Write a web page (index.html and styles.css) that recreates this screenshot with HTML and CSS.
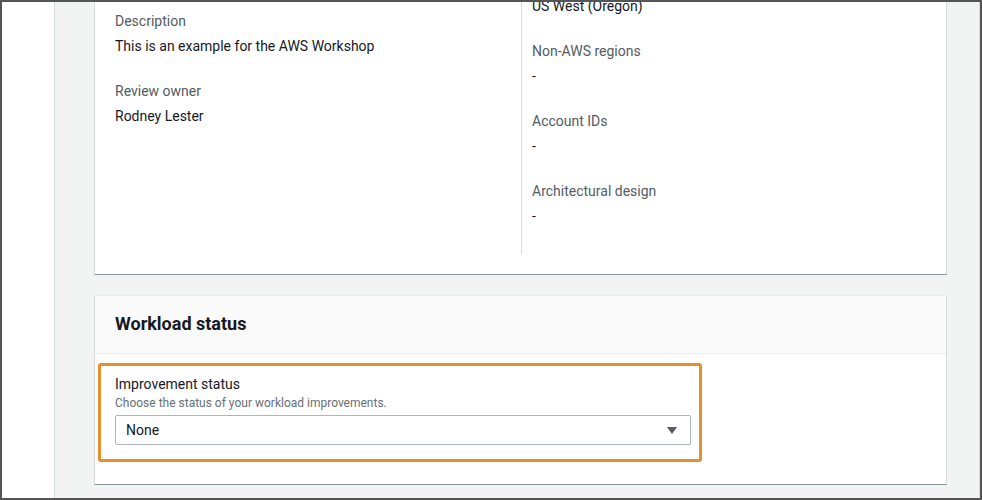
FILE: index.html
```html
<!DOCTYPE html>
<html lang="en">
<head>
<meta charset="utf-8">
<title>Workload</title>
<link rel="stylesheet" href="styles.css">
</head>
<body>
<div class="frame">
  <nav class="sidenav"></nav>
  <main class="main">
    <section class="card card-details">
      <div class="columns">
        <div class="col col-left">
          <div class="item">
            <div class="label">Description</div>
            <div class="value">This is an example for the AWS Workshop</div>
          </div>
          <div class="item">
            <div class="label">Review owner</div>
            <div class="value">Rodney Lester</div>
          </div>
        </div>
        <div class="col col-right">
          <div class="item">
            <div class="label">Regions</div>
            <div class="value">US West (Oregon)</div>
          </div>
          <div class="item">
            <div class="label">Non-AWS regions</div>
            <div class="value">-</div>
          </div>
          <div class="item">
            <div class="label">Account IDs</div>
            <div class="value">-</div>
          </div>
          <div class="item">
            <div class="label">Architectural design</div>
            <div class="value">-</div>
          </div>
        </div>
      </div>
    </section>
    <section class="card card-status">
      <header class="card-header">
        <h2 class="card-title">Workload status</h2>
      </header>
      <div class="card-body">
        <div class="highlight">
          <div class="field">
            <div class="field-label">Improvement status</div>
            <div class="field-desc">Choose the status of your workload improvements.</div>
            <div class="select">
              <span class="select-value">None</span>
              <svg class="select-caret" width="10" height="7" viewBox="0 0 10 7"><polygon points="0,0 10,0 5,7" fill="#545b64"/></svg>
            </div>
          </div>
        </div>
      </div>
    </section>
  </main>
  <div class="scroll-edge"></div>
</div>
</body>
</html>
```
FILE: styles.css
```css
* { box-sizing: border-box; }
html, body { margin: 0; padding: 0; }
body {
  font-family: Roboto, "Liberation Sans", Arial, sans-serif;
  font-size: 14px;
  line-height: 22px;
  color: #16191f;
  background: #ffffff;
}
.frame {
  width: 982px;
  height: 500px;
  border: 2px solid #555555;
  display: flex;
  overflow: hidden;
}
.sidenav {
  width: 53px;
  flex: none;
  background: #ffffff;
  border-right: 1px solid #d5dbdb;
}
.main {
  flex: 1;
  min-width: 0;
  background: #f2f3f3;
  overflow: hidden;
  padding: 0 32px 0 39px;
}
.scroll-edge {
  width: 1px;
  flex: none;
  background: #d5dbdb;
}
.card {
  background: #ffffff;
  border-top: 1px solid #eaeded;
  border-left: 1px solid #d5dbdb;
  border-right: 1px solid #d5dbdb;
  border-bottom: 1px solid #879596;
}
.card-details {
  margin-top: -54px;
  padding: 20px;
}
.columns {
  display: grid;
  grid-template-columns: 406px 1fr;
}
.col-left { padding-top: 41px; }
.col-right {
  border-left: 1px solid #d5dbdb;
  padding-left: 10px;
  padding-top: 1px;
  padding-bottom: 4px;
}
.item { padding-bottom: 23px; }
.label { color: #545b64; }
.value { margin-top: 3px; color: #16191f; }

.card-status { margin-top: 20px; }
.card-header {
  background: #fafafa;
  border-bottom: 1px solid #eaeded;
  padding: 17px 20px 18px;
}
.card-title {
  margin: 0;
  font-size: 18px;
  line-height: 22px;
  font-weight: 700;
  color: #16191f;
}
.card-body {
  padding: 9px 20px 22px;
}
.highlight {
  width: 604px;
  margin-left: -17px;
  border: 3px solid #e88e2c;
  border-radius: 3px;
  padding: 7px 8px 14px 14px;
}
.field-label { color: #16191f; }
.field-desc {
  font-size: 12px;
  line-height: 16px;
  color: #687078;
}
.select {
  margin-top: 4px;
  height: 30px;
  border: 1px solid #aab7b8;
  border-radius: 2px;
  display: flex;
  align-items: center;
  justify-content: space-between;
  padding: 0 13px 0 10px;
}
.select-value { color: #16191f; }
.select-caret { display: block; }
```
